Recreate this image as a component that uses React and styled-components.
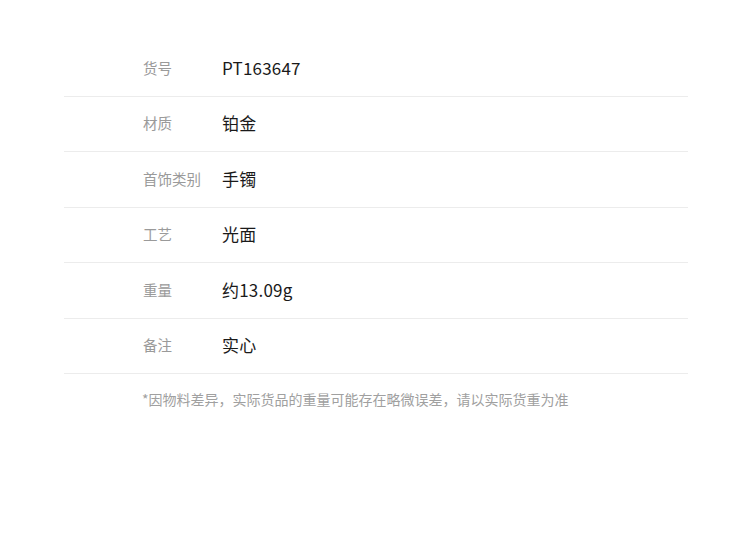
import React from 'react';
import styled, { createGlobalStyle } from 'styled-components';

const rows = [
  { label: '货号', value: 'PT163647' },
  { label: '材质', value: '铂金' },
  { label: '首饰类别', value: '手镯' },
  { label: '工艺', value: '光面' },
  { label: '重量', value: '约13.09g' },
  { label: '备注', value: '实心' },
];

const App = () => {
  return (
    <>
      <GlobalStyle />
      <Page>
        <Table>
          {rows.map((r) => (
            <Row key={r.label}>
              <Label>{r.label}</Label>
              <Value>{r.value}</Value>
            </Row>
          ))}
        </Table>
        <Note>*因物料差异，实际货品的重量可能存在略微误差，请以实际货重为准</Note>
      </Page>
    </>
  );
};

const GlobalStyle = createGlobalStyle`
  body {
    margin: 0;
    background: #fff;
    font-family: "Noto Sans CJK SC", "Noto Sans", sans-serif;
  }
`;

const Page = styled.div`
  width: 750px;
  height: 545px;
  padding-top: 41px;
  box-sizing: border-box;
`;

const Table = styled.div`
  margin: 0 62px 0 64px;
`;

const Row = styled.div`
  display: flex;
  align-items: center;
  height: 55.5px;
  padding-bottom: 2px;
  box-sizing: border-box;
  border-bottom: 1px solid #ececec;
`;

const Label = styled.div`
  width: 79px;
  padding-left: 79px;
  font-size: 14.5px;
  color: #9a9a9a;
`;

const Value = styled.div`
  font-size: 17px;
  letter-spacing: 0.2px;
  color: #1a1a1a;
`;

const Note = styled.div`
  margin: 15px 0 0 142px;
  font-size: 14px;
  color: #a0a0a0;
`;

export default App;
